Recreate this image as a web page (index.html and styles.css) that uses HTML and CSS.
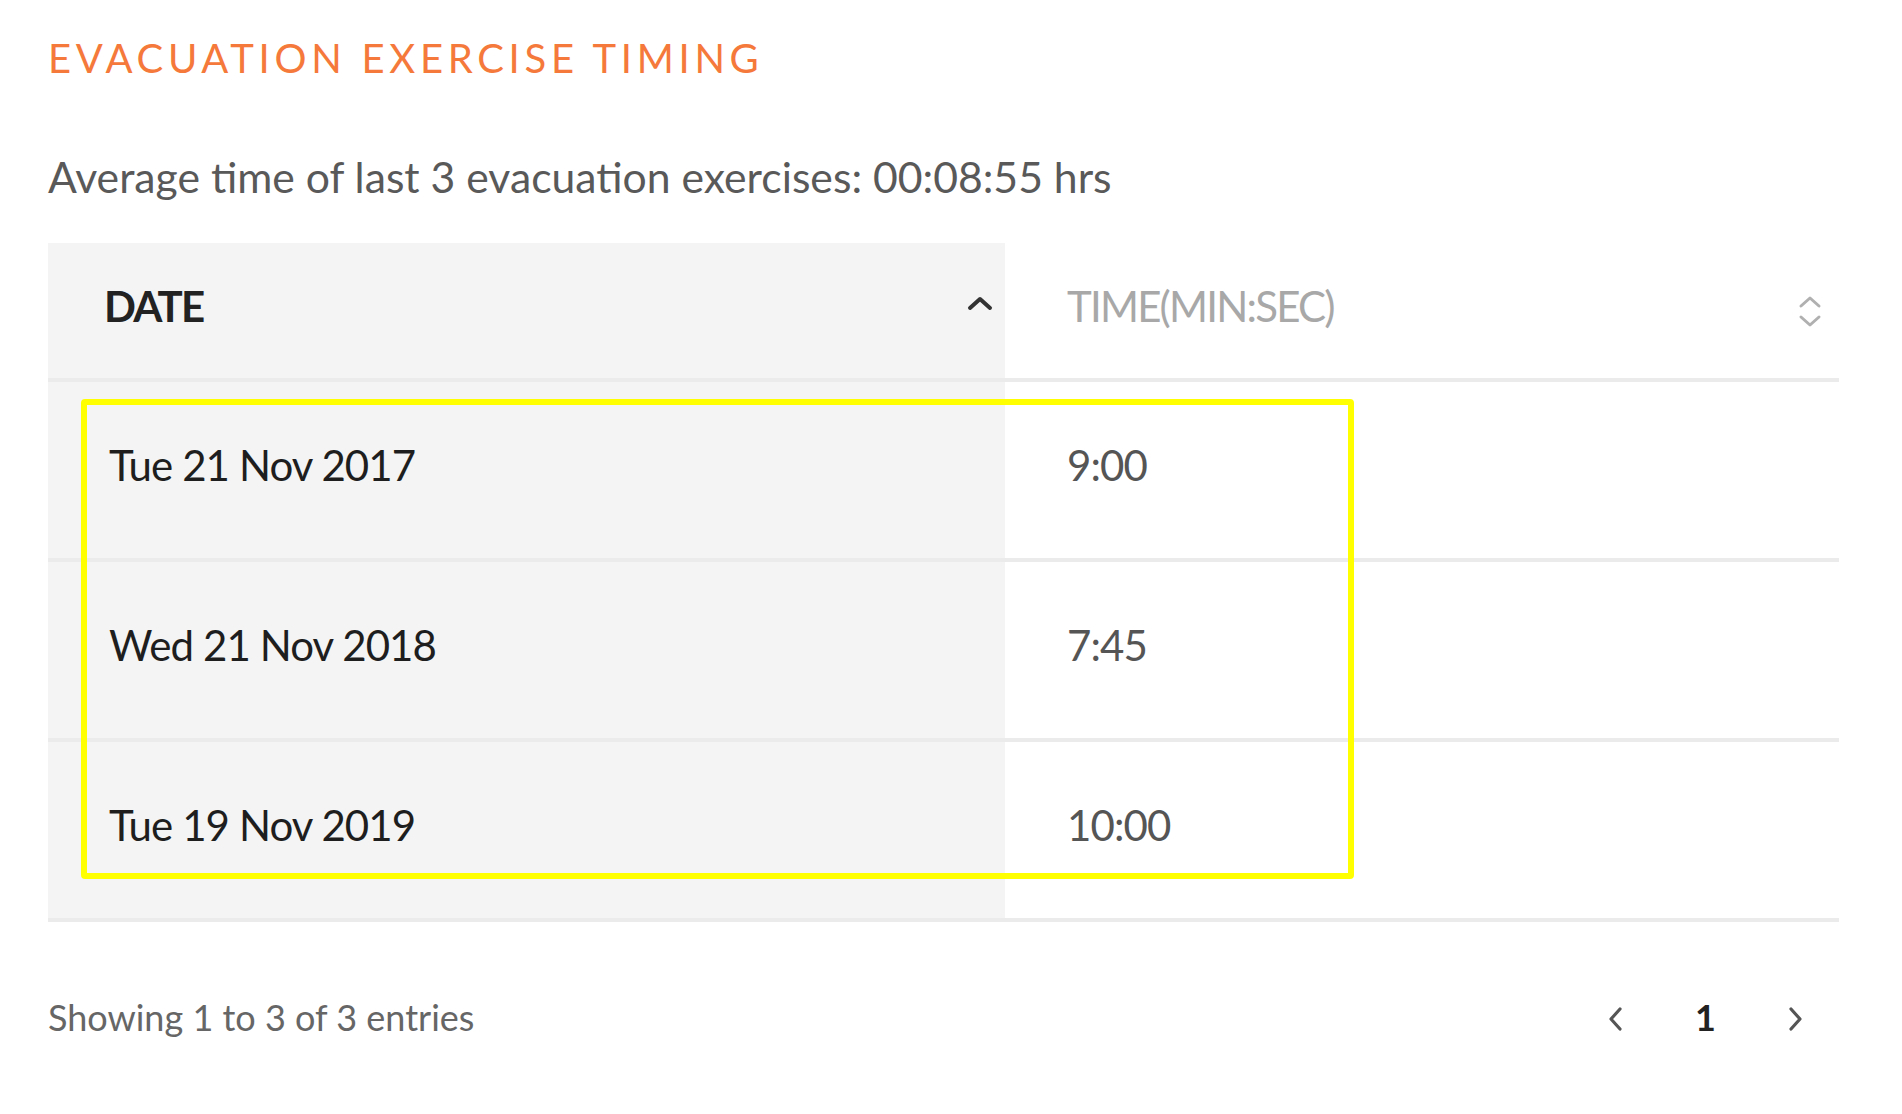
FILE: index.html
```html
<!DOCTYPE html>
<html lang="en">
<head>
<meta charset="utf-8">
<title>Evacuation Exercise Timing</title>
<link rel="stylesheet" href="styles.css">
</head>
<body>
<main class="panel">
  <h1 class="title">EVACUATION EXERCISE TIMING</h1>
  <p class="summary">Average time of last 3 evacuation exercises: 00:08:55 hrs</p>
  <div class="table-wrap">
    <table class="grid">
      <colgroup>
        <col class="c-date">
        <col class="c-time">
      </colgroup>
      <thead>
        <tr>
          <th class="col-date">
            <div class="th-inner">
              <span class="th-label th-active">DATE</span>
              <svg class="sort-up" width="26" height="16" viewBox="0 0 26 16"><path d="M3 13 L13 4 L23 13" fill="none" stroke="#333" stroke-width="4" stroke-linecap="round" stroke-linejoin="round"/></svg>
            </div>
          </th>
          <th class="col-time">
            <div class="th-inner">
              <span class="th-label th-muted">TIME(MIN:SEC)</span>
              <svg class="sort-both" width="26" height="34" viewBox="0 0 26 34"><path d="M4 11 L13 3 L22 11" fill="none" stroke="#b0b0b0" stroke-width="3" stroke-linecap="round" stroke-linejoin="round"/><path d="M4 22 L13 30 L22 22" fill="none" stroke="#b0b0b0" stroke-width="3" stroke-linecap="round" stroke-linejoin="round"/></svg>
            </div>
          </th>
        </tr>
      </thead>
      <tbody>
        <tr><td class="col-date">Tue 21 Nov 2017</td><td class="col-time">9:00</td></tr>
        <tr><td class="col-date">Wed 21 Nov 2018</td><td class="col-time">7:45</td></tr>
        <tr><td class="col-date">Tue 19 Nov 2019</td><td class="col-time">10:00</td></tr>
      </tbody>
    </table>
    <div class="highlight"></div>
  </div>
  <div class="footer">
    <span class="info">Showing 1 to 3 of 3 entries</span>
    <nav class="pager">
      <svg class="pg-arrow" width="20" height="28" viewBox="0 0 20 28"><path d="M15 4 L6 14 L15 24" fill="none" stroke="#555" stroke-width="3.2" stroke-linecap="round" stroke-linejoin="round"/></svg>
      <span class="pg-num">1</span>
      <svg class="pg-arrow" width="20" height="28" viewBox="0 0 20 28"><path d="M5 4 L14 14 L5 24" fill="none" stroke="#555" stroke-width="3.2" stroke-linecap="round" stroke-linejoin="round"/></svg>
    </nav>
  </div>
</main>
</body>
</html>
```
FILE: styles.css
```css
html, body {
  margin: 0;
  padding: 0;
  background: #ffffff;
}

.panel {
  font-family: Lato, "Open Sans", sans-serif;
  padding: 34px 63px 0 48px;
}

.title {
  margin: 0;
  font-size: 40px;
  line-height: 48px;
  font-weight: 400;
  letter-spacing: 4.7px;
  color: #f5793a;
}

.summary {
  margin: 70px 0 0 0;
  font-size: 42.7px;
  line-height: 50px;
  color: #595959;
}

.table-wrap {
  position: relative;
  margin-top: 41px;
}

.grid {
  width: 100%;
  border-collapse: collapse;
  table-layout: fixed;
}

.c-date {
  width: 957px;
}

.grid th,
.grid td {
  padding: 0;
  text-align: left;
  border-bottom: 4px solid #ebebeb;
}

.grid th {
  height: 125px;
  padding-bottom: 10px;
}

.grid td {
  height: 166px;
  padding-bottom: 10px;
  font-size: 42px;
  letter-spacing: -0.9px;
}

.col-date {
  background: #f4f4f4;
}

th.col-date {
  padding-left: 56px;
}

td.col-date {
  padding-left: 61px;
  color: #1e1e1e;
}

th.col-time,
td.col-time {
  padding-left: 62px;
}

td.col-time {
  color: #555555;
}

.th-inner {
  display: flex;
  align-items: center;
  justify-content: space-between;
}

th.col-date .th-inner {
  padding-right: 12px;
}

th.col-time .th-inner {
  padding-right: 16px;
}

.th-label {
  font-size: 42px;
  letter-spacing: -1.8px;
}

.th-active {
  font-weight: 700;
  color: #222222;
}

.th-muted {
  font-weight: 400;
  color: #a8a8a8;
}

.sort-up {
  display: block;
  margin-top: -6px;
}

.sort-both {
  display: block;
  margin-top: 12px;
}

.highlight {
  position: absolute;
  left: 33px;
  top: 156px;
  width: 1261px;
  height: 468px;
  border: 6px solid #ffff00;
  border-radius: 4px;
  pointer-events: none;
}

.footer {
  display: flex;
  align-items: center;
  justify-content: space-between;
  margin-top: 73px;
}

.info {
  font-size: 36px;
  color: #666666;
}

.pager {
  display: flex;
  align-items: center;
  gap: 70px;
  padding-right: 33px;
}

.pg-arrow {
  display: block;
  margin-top: 3px;
}

.pg-num {
  font-size: 36px;
  font-weight: 700;
  color: #222222;
}
```
